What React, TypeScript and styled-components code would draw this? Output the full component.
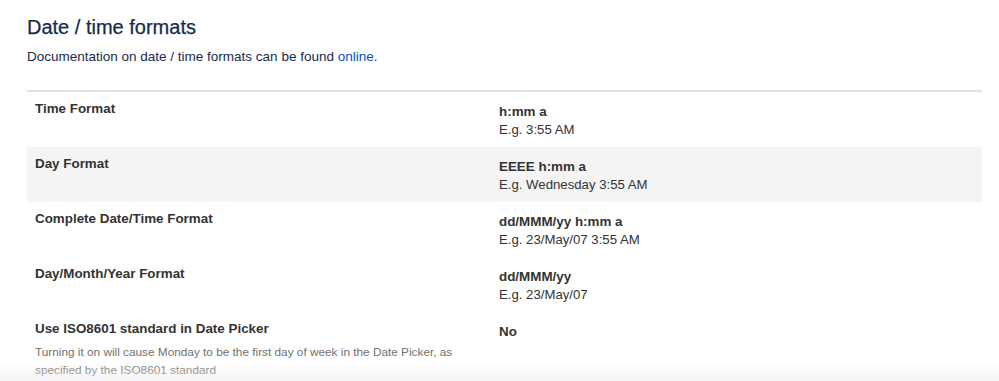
import React from 'react'
import styled, { createGlobalStyle } from 'styled-components'

const GlobalStyle = createGlobalStyle`
  html, body {
    margin: 0;
    padding: 0;
    background: #fff;
  }
  body {
    font-family: "Liberation Sans", Arial, Helvetica, sans-serif;
    color: #172b4d;
    overflow: hidden;
  }
`

type Row = {
  label: string
  hint?: string
  value: string
  example?: string
}

const rows: Row[] = [
  { label: 'Time Format', value: 'h:mm a', example: 'E.g. 3:55 AM' },
  { label: 'Day Format', value: 'EEEE h:mm a', example: 'E.g. Wednesday 3:55 AM' },
  { label: 'Complete Date/Time Format', value: 'dd/MMM/yy h:mm a', example: 'E.g. 23/May/07 3:55 AM' },
  { label: 'Day/Month/Year Format', value: 'dd/MMM/yy', example: 'E.g. 23/May/07' },
  {
    label: 'Use ISO8601 standard in Date Picker',
    hint: 'Turning it on will cause Monday to be the first day of week in the Date Picker, as specified by the ISO8601 standard',
    value: 'No',
  },
]

// the second row is the one being hovered in the screenshot
const hoveredRow = 1

export default function App() {
  return (
    <Page>
      <GlobalStyle />
      <Title>Date / time formats</Title>
      <Intro>
        Documentation on date / time formats can be found <Link href="#">online</Link>.
      </Intro>
      <Table>
        {rows.map((r, i) => (
          <TableRow key={r.label} shaded={i === hoveredRow}>
            <LabelCell>
              <Label>{r.label}</Label>
              {r.hint && <Hint>{r.hint}</Hint>}
            </LabelCell>
            <ValueCell>
              <Value>{r.value}</Value>
              {r.example && <Example>{r.example}</Example>}
            </ValueCell>
          </TableRow>
        ))}
      </Table>
      <BottomFade />
    </Page>
  )
}

const Page = styled.div`
  padding: 14px 17px 0 27px;
  height: 381px;
  box-sizing: border-box;
`

const Title = styled.h2`
  margin: 0;
  font-size: 20px;
  font-weight: 500;
  line-height: 26px;
  color: #172b4d;
  -webkit-text-stroke: 0.25px #172b4d;
`

const Intro = styled.p`
  margin: 7px 0 0;
  font-size: 13.5px;
  line-height: 20px;
  color: #172b4d;
`

const Link = styled.a`
  color: #0052cc;
  text-decoration: none;
`

const Table = styled.div`
  margin-top: 23px;
  border-top: 2px solid #dfe1e6;
  display: flex;
  flex-direction: column;
`

const TableRow = styled.div<{ shaded?: boolean }>`
  display: grid;
  grid-template-columns: 472px 1fr;
  min-height: 55px;
  background: ${p => (p.shaded ? '#f4f4f4' : 'transparent')};
`

const LabelCell = styled.div`
  padding: 8px 8px 0 8px;
`

const Label = styled.div`
  font-size: 13.4px;
  font-weight: 700;
  line-height: 18px;
  color: #333;
`

const Hint = styled.div`
  margin-top: 5px;
  font-size: 11.8px;
  line-height: 18px;
  color: #707070;
  max-width: 440px;
`

const ValueCell = styled.div`
  padding: 11px 8px 0 0;
`

const Value = styled.div`
  font-size: 13.4px;
  font-weight: 700;
  line-height: 18px;
  color: #333;
`

const Example = styled.div`
  font-size: 13.2px;
  line-height: 18px;
  color: #333;
`

const BottomFade = styled.div`
  position: fixed;
  left: 0;
  right: 0;
  bottom: 0;
  height: 22px;
  background: linear-gradient(to bottom, rgba(240, 240, 240, 0), rgba(238, 238, 238, 0.6));
  pointer-events: none;
`
